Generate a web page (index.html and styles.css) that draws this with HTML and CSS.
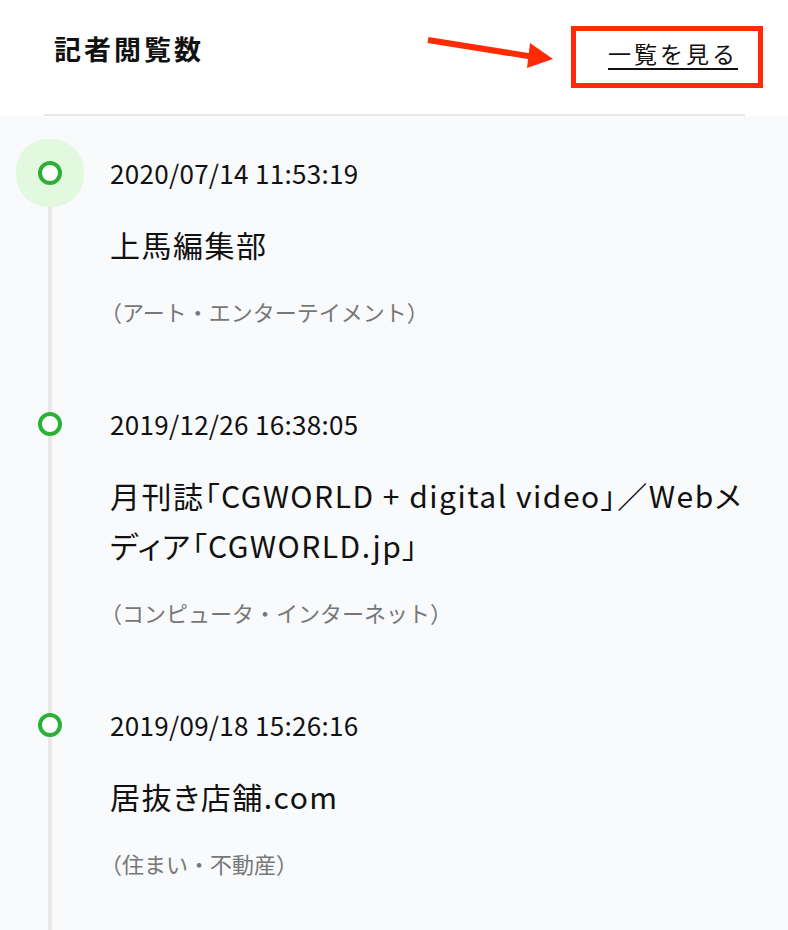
FILE: index.html
```html
<!DOCTYPE html>
<html lang="ja">
<head>
<meta charset="utf-8">
<title>記者閲覧数</title>
<link rel="stylesheet" href="styles.css">
</head>
<body>
<header class="head">
  <div class="head-inner">
    <h2 class="title">記者閲覧数</h2>
    <a class="more" href="#">一覧を見る</a>
  </div>
  <div class="note-box"></div>
  <svg class="note-arrow" width="150" height="50" viewBox="0 0 150 50">
    <line x1="8" y1="15" x2="114" y2="32" stroke="#ff2b06" stroke-width="6"/>
    <polygon points="110,18 107,43 133,34" fill="#ff2b06"/>
  </svg>
</header>
<ul class="timeline">
  <li class="item">
    <span class="dot dot-current"></span>
    <div class="body">
      <p class="date">2020/07/14 11:53:19</p>
      <p class="name">上馬編集部</p>
      <p class="cat">（アート・エンターテイメント）</p>
    </div>
  </li>
  <li class="item">
    <span class="dot"></span>
    <div class="body">
      <p class="date">2019/12/26 16:38:05</p>
      <p class="name">月刊誌「CGWORLD + digital video」／Webメディア「CGWORLD.jp」</p>
      <p class="cat">（コンピュータ・インターネット）</p>
    </div>
  </li>
  <li class="item">
    <span class="dot"></span>
    <div class="body">
      <p class="date">2019/09/18 15:26:16</p>
      <p class="name">居抜き店舗.com</p>
      <p class="cat">（住まい・不動産）</p>
    </div>
  </li>
</ul>
</body>
</html>
```
FILE: styles.css
```css
html, body {
  margin: 0;
  padding: 0;
}
body {
  background: #f9fafc;
  font-family: "Noto Sans CJK JP", "Noto Sans", sans-serif;
  color: #111;
  width: 788px;
  height: 930px;
  overflow: hidden;
}
.head {
  position: relative;
  background: #fff;
  padding: 0 43px 0 44px;
}
.head-inner {
  height: 114px;
  border-bottom: 2px solid #e8e8e8;
  display: flex;
  justify-content: space-between;
  align-items: flex-start;
}
.title {
  margin: 28px 0 0 10px;
  font-size: 27px;
  line-height: 42px;
  font-weight: 700;
  letter-spacing: 3px;
}
.more {
  margin: 33px 7px 0 0;
  font-size: 23px;
  line-height: 40px;
  color: #111;
  letter-spacing: 3px;
  text-decoration: underline;
  text-underline-offset: 5px;
  text-decoration-thickness: 2px;
}
.note-box {
  position: absolute;
  left: 571px;
  top: 26px;
  width: 192px;
  height: 62px;
  box-sizing: border-box;
  border: 5px solid #ff2b06;
}
.note-arrow {
  position: absolute;
  left: 420px;
  top: 25px;
}
.timeline {
  position: relative;
  list-style: none;
  margin: 0;
  padding: 39px 40px 0 0;
}
.timeline::before {
  content: "";
  position: absolute;
  left: 48px;
  width: 4px;
  top: 58px;
  bottom: -200px;
  background: #e8e8e8;
}
.item {
  display: flex;
  align-items: flex-start;
  margin-bottom: 77px;
}
.dot {
  position: relative;
  flex: none;
  width: 24px;
  height: 24px;
  margin: 6px 48px 0 38px;
  box-sizing: border-box;
  border: 4px solid #2bb136;
  border-radius: 50%;
  background: #fff;
  z-index: 1;
}
.dot-current {
  box-shadow: 0 0 0 22px #e2f8df;
}
.body {
  flex: 1;
  min-width: 0;
}
.body p {
  margin: 0;
}
.date {
  font-size: 26px;
  line-height: 36px;
  letter-spacing: 0.3px;
}
.name {
  margin-top: 28px !important;
  font-size: 30px;
  line-height: 50px;
  letter-spacing: 1.5px;
  font-feature-settings: "palt";
}
.cat {
  margin: 24px 0 0 -10px !important;
  font-size: 22px;
  line-height: 36px;
  color: #777;
}
```
